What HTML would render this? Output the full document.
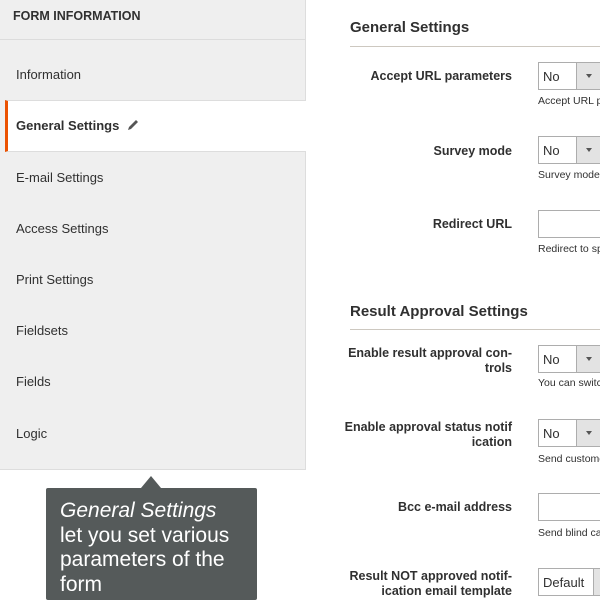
<!DOCTYPE html>
<html><head><style>
*{margin:0;padding:0;box-sizing:border-box}
html,body{width:600px;height:600px;overflow:hidden}
body{background:#fff;font-family:"Liberation Sans",sans-serif;color:#303030;position:relative}
.side{position:absolute;left:0;top:0;width:306px;height:470px;background:#efefef;border-right:1px solid #ddd;border-bottom:1px solid #ddd}
.hd{position:absolute;left:0;top:0;width:305px;height:40px;border-bottom:1px solid #dcdcdc;font-weight:bold;font-size:12.5px;padding:9px 0 0 13px;color:#303030}
.it{position:absolute;left:16px;font-size:13px;color:#303030}
.act{position:absolute;left:5px;top:100px;width:301px;height:52px;background:#fff;border-left:3px solid #eb5202;border-top:1px solid #ddd;border-bottom:1px solid #ddd}
.act span{position:absolute;left:8px;top:17px;font-size:13px;font-weight:bold}
.tip{position:absolute;left:46px;top:488px;width:211px;height:112px;background:#555a5a;border-radius:2px;color:#fff;font-family:"Liberation Sans",Helvetica,sans-serif;font-size:21px;line-height:24.5px;padding:11px 0 0 14px}
.arr{position:absolute;left:141px;top:476px;width:0;height:0;border-left:10px solid transparent;border-right:10px solid transparent;border-bottom:12px solid #555a5a}
.h2{position:absolute;left:350px;font-size:15px;font-weight:bold;color:#303030}
.line{position:absolute;left:350px;width:250px;height:1px;background:#cdc8c0}
.lb{position:absolute;right:88px;width:180px;text-align:right;font-size:12.5px;font-weight:bold;line-height:15px}
.sel{position:absolute;left:538px;width:62px;height:28px;border:1px solid #adadad;border-right:none;background:#fff;font-size:13px;padding:6px 0 0 4px;overflow:hidden}
.sel i{position:absolute;left:37px;top:0;width:30px;height:26px;background:#e3e3e3;border-left:1px solid #adadad}
.sel i:after{content:"";position:absolute;left:9px;top:11px;border-left:3px solid transparent;border-right:3px solid transparent;border-top:4px solid #555}
.inp{position:absolute;left:538px;width:62px;height:28px;border:1px solid #adadad;border-right:none;background:#fff}
.hp{position:absolute;left:538px;width:62px;overflow:hidden;font-size:10.5px;color:#303030;white-space:nowrap}
</style></head><body>
<div class="side">
<div class="hd">FORM INFORMATION</div>
<div class="it" style="top:67px">Information</div>
<div class="it" style="top:170px">E-mail Settings</div>
<div class="it" style="top:221px">Access Settings</div>
<div class="it" style="top:272px">Print Settings</div>
<div class="it" style="top:323px">Fieldsets</div>
<div class="it" style="top:374px">Fields</div>
<div class="it" style="top:426px">Logic</div>
</div>
<div class="act"><span>General Settings</span>
<svg style="position:absolute;left:118px;top:17px" width="14" height="14" viewBox="0 0 14 14"><path d="M2 12 L3 9 L10 2 L12 4 L5 11 Z" fill="#555"/></svg></div>
<div class="arr"></div>
<div class="tip"><i>General Settings</i><br>let you set various<br>parameters of the<br>form</div>

<div class="h2" style="top:19px">General Settings</div>
<div class="line" style="top:46px"></div>
<div class="lb" style="top:69px">Accept URL parameters</div>
<div class="sel" style="top:62px">No<i></i></div>
<div class="hp" style="top:95px">Accept URL parameters</div>
<div class="lb" style="top:144px">Survey mode</div>
<div class="sel" style="top:136px">No<i></i></div>
<div class="hp" style="top:169px">Survey mode</div>
<div class="lb" style="top:217px">Redirect URL</div>
<div class="inp" style="top:210px"></div>
<div class="hp" style="top:243px">Redirect to specified URL</div>

<div class="h2" style="top:303px">Result Approval Settings</div>
<div class="line" style="top:329px"></div>
<div class="lb" style="top:346px">Enable result approval con-<br>trols</div>
<div class="sel" style="top:345px">No<i></i></div>
<div class="hp" style="top:377px">You can switch</div>
<div class="lb" style="top:420px">Enable approval status notif<br>ication</div>
<div class="sel" style="top:419px">No<i></i></div>
<div class="hp" style="top:453px">Send customer</div>
<div class="lb" style="top:500px">Bcc e-mail address</div>
<div class="inp" style="top:493px"></div>
<div class="hp" style="top:527px">Send blind carbon</div>
<div class="lb" style="top:569px">Result NOT approved notif-<br>ication email template</div>
<div class="sel" style="top:568px">Default<i style="left:54px"></i></div>
</body></html>
